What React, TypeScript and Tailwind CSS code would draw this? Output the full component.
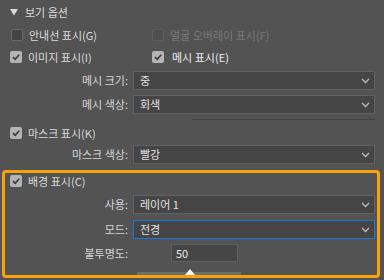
import React from 'react';

// Photoshop-style "보기 옵션" panel
function Check({ checked, disabled }: { checked?: boolean; disabled?: boolean }) {
  if (checked) {
    return (
      <div className="w-[12px] h-[12px] rounded-[2px] bg-[#b4b4b4] flex items-center justify-center shrink-0">
        <svg width="10" height="10" viewBox="0 0 10 10">
          <path d="M2 5.2 L4.2 7.3 L8.2 2.8" fill="none" stroke="#3c3c3c" strokeWidth="1.7" />
        </svg>
      </div>
    );
  }
  return (
    <div
      className={`w-[12px] h-[12px] rounded-[2px] border shrink-0 ${
        disabled ? 'border-[#5d5d5d] bg-[#4f4f4f]' : 'border-[#6c6c6c] bg-[#444444]'
      }`}
    />
  );
}

function Chevron() {
  return (
    <svg width="9" height="6" viewBox="0 0 9 6" className="shrink-0">
      <path d="M1 1 L4.5 4.5 L8 1" fill="none" stroke="#bdbdbd" strokeWidth="1.3" />
    </svg>
  );
}

function Select({ value, focused }: { value: string; focused?: boolean }) {
  return (
    <div
      className={`h-[19px] flex items-center justify-between pl-[6px] pr-[4px] bg-[#454545] border ${
        focused ? 'border-[#1b74e4]' : 'border-[#616161]'
      }`}
    >
      <span className="text-[#e2e2e2] leading-none">{value}</span>
      <Chevron />
    </div>
  );
}

function CheckRow({ label, checked, disabled }: { label: string; checked?: boolean; disabled?: boolean }) {
  return (
    <div className="flex items-center gap-[6px]">
      <Check checked={checked} disabled={disabled} />
      <span className={disabled ? 'text-[#787878]' : 'text-[#dadada]'}>{label}</span>
    </div>
  );
}

function FieldRow({ label, children, labelW = 'w-[128px]' }: { label: string; children: React.ReactNode; labelW?: string }) {
  return (
    <div className="flex items-center gap-[5px]">
      <div className={`${labelW} text-right shrink-0 text-[#d6d6d6]`}>{label}</div>
      <div className="flex-1">{children}</div>
    </div>
  );
}

export default function App() {
  return (
    <div className="w-[384px] h-[280px] bg-[#535353] overflow-hidden text-[11px] leading-none font-['Noto_Sans_CJK_KR','Malgun_Gothic',sans-serif] text-[#d6d6d6]">
      {/* header */}
      <div className="h-[24px] flex items-center pl-[10px] gap-[7px]">
        <svg width="8" height="7" viewBox="0 0 8 7">
          <path d="M0 0 H8 L4 6.5 Z" fill="#d8d8d8" />
        </svg>
        <span className="text-[#dadada]">보기 옵션</span>
      </div>

      <div className="h-[22px] flex items-center pl-[11px]">
        <div className="w-[141px]">
          <CheckRow label="안내선 표시(G)" />
        </div>
        <CheckRow label="얼굴 오버레이 표시(F)" disabled />
      </div>
      <div className="h-[22px] flex items-center pl-[10px]">
        <div className="w-[142px]">
          <CheckRow label="이미지 표시(I)" checked />
        </div>
        <div className="flex items-center gap-[8px]">
          <Check checked />
          <span className="text-[#ececec]">메시 표시(E)</span>
        </div>
      </div>

      <div className="pr-[9px] mt-[3px] flex flex-col gap-[5px]">
        <FieldRow label="메시 크기:">
          <Select value="중" />
        </FieldRow>
        <FieldRow label="메시 색상:">
          <Select value="회색" />
        </FieldRow>
      </div>
      <div className="h-[8px] flex items-end pb-[2px] pl-[192px] pr-[9px]">
        <div className="h-[1px] w-full bg-[#434343]" />
      </div>

      <div className="h-[22px] flex items-center pl-[10px]">
        <CheckRow label="마스크 표시(K)" checked />
      </div>
      <div className="pr-[9px] mt-[1px]">
        <FieldRow label="마스크 색상:">
          <Select value="빨강" />
        </FieldRow>
      </div>

      {/* highlighted group */}
      <div className="mt-[6px] mx-[2px] w-[378px] h-[108px] border-[3px] border-[#f7a10d] rounded-[4px] pr-[2px]">
        <div className="h-[16px] flex items-center pl-[5px]">
          <CheckRow label="배경 표시(C)" checked />
        </div>
        <div className="mt-[6px] flex flex-col gap-[6px]">
          <FieldRow label="사용:" labelW="w-[123px]">
            <Select value="레이어 1" />
          </FieldRow>
          <FieldRow label="모드:" labelW="w-[123px]">
            <Select value="전경" focused />
          </FieldRow>
        </div>
        <div className="mt-[5px]">
          <FieldRow label="불투명도:" labelW="w-[123px]">
            <div className="ml-[38px] w-[67px] h-[18px] bg-[#464646] border border-[#5f5f5f] flex items-center pl-[4px] text-[#e6e6e6]">
              50
            </div>
          </FieldRow>
        </div>
        <div className="mt-[10px] ml-[132px] w-[104px] h-[3px] bg-[#6d6d6d] relative">
          <svg width="10" height="6" viewBox="0 0 10 6" className="absolute left-[48px] top-[-3px]">
            <path d="M5 0 L10 6 H0 Z" fill="#f4f4f4" />
          </svg>
        </div>
      </div>
    </div>
  );
}
